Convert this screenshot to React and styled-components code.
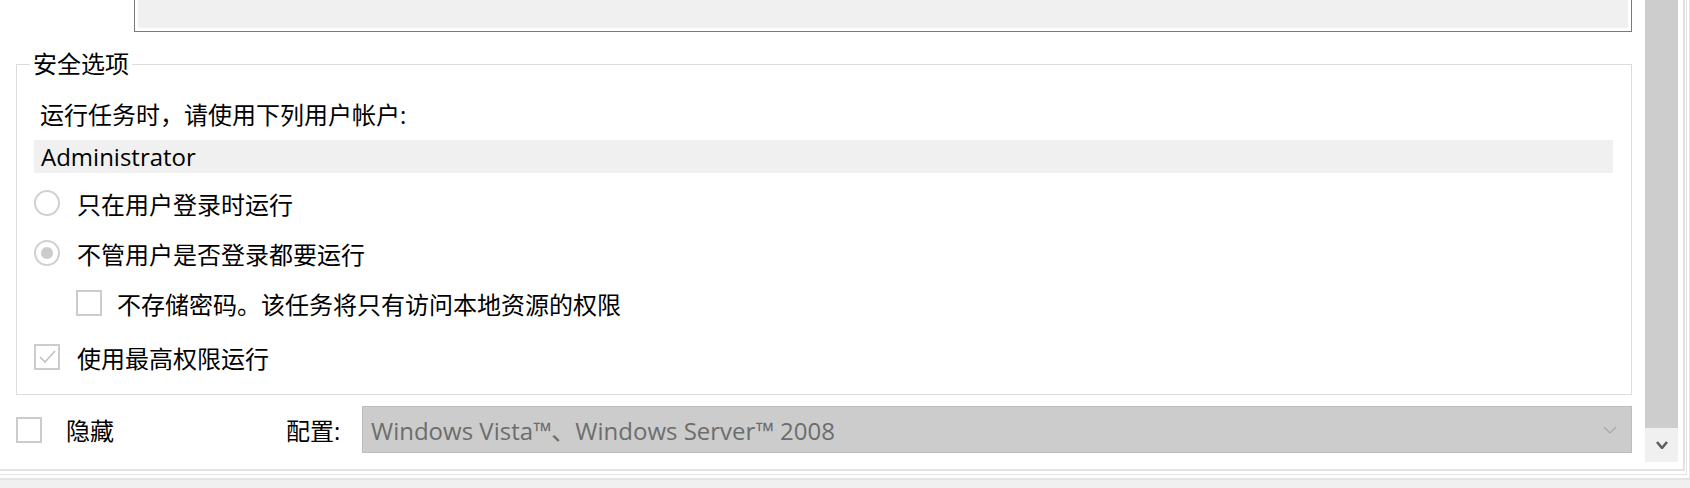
import React from 'react';
import styled, { createGlobalStyle } from 'styled-components';

const GlobalStyle = createGlobalStyle`
  html, body {
    margin: 0;
    padding: 0;
    background: #f0f0f0;
  }
  body {
    font-family: "Open Sans", "Noto Sans CJK SC", sans-serif;
    color: #000;
    overflow: hidden;
  }
  * {
    box-sizing: border-box;
  }
`;

const Screen = styled.div`
  width: 1690px;
  height: 488px;
  background: #f0f0f0;
  overflow: hidden;
`;

const OuterFrame = styled.div`
  height: 480px;
  padding: 0 2px 3px 0;
  background: #fff;
  border-bottom: 2px solid #e3e3e3;
  border-right: 1px solid #e6e6e6;
`;

const MiddleFrame = styled.div`
  height: 475px;
  padding: 0 1px 3px 0;
  border-bottom: 1px solid #e3e3e3;
  border-right: 1px solid #e6e6e6;
`;

const InnerFrame = styled.div`
  height: 471px;
  display: flex;
  border-bottom: 2px solid #e3e3e3;
  border-right: 2px solid #e3e3e3;
`;

const Content = styled.div`
  width: 1645px;
  padding-right: 13px;
  display: flex;
  flex-direction: column;
`;

const TopBox = styled.div`
  margin-left: 134px;
  height: 32px;
  padding: 0 3px 3px;
  border: 1px solid #7a7a7a;
  border-top: none;
`;

const TopFill = styled.div`
  height: 100%;
  background: #f0f0f0;
`;

const Group = styled.fieldset`
  margin: 16px 0 0 16px;
  padding: 0 18px 12px 17px;
  border: 1px solid #dcdcdc;
  height: 347px;
`;

const Legend = styled.legend`
  margin-left: -4px;
  padding: 0 3px;
  font-size: 24px;
  line-height: 32px;
`;

const Label = styled.div`
  margin-top: 19px;
  padding-left: 6px;
  height: 32px;
  font-size: 24px;
  line-height: 32px;
`;

const UserBand = styled.div`
  margin-top: 9px;
  height: 33px;
  padding-left: 7px;
  background: #f0f0f0;
  font-size: 24px;
  line-height: 33px;
`;

const Options = styled.div`
  margin-top: 5px;
  display: flex;
  flex-direction: column;
`;

const OptionRow = styled.div`
  height: 50px;
  display: flex;
  align-items: center;
  gap: ${(p) => (p.$indent ? 15 : 17)}px;
  padding-left: ${(p) => (p.$indent ? 42 : 0)}px;
  margin-top: ${(p) => p.$offset || 0}px;
  font-size: 24px;
`;

const Radio = styled.span`
  flex: none;
  width: 26px;
  height: 26px;
  border-radius: 50%;
  border: 2px solid #d0d0d0;
  background: #fff;
  display: flex;
  align-items: center;
  justify-content: center;

  &::after {
    content: '';
    width: 12px;
    height: 12px;
    border-radius: 50%;
    background: ${(p) => (p.$checked ? '#cccccc' : 'transparent')};
  }
`;

const Box = styled.span`
  flex: none;
  width: 26px;
  height: 26px;
  border: 2px solid #cccccc;
  background: #fff;
  display: flex;
  align-items: center;
  justify-content: center;
`;

const BottomRow = styled.div`
  margin-top: 11px;
  padding-left: 16px;
  height: 47px;
  display: flex;
  align-items: center;
  font-size: 24px;
`;

const HiddenLabel = styled.span`
  margin-left: 24px;
  width: 220px;
`;

const ConfigLabel = styled.span`
  width: 76px;
`;

const Combo = styled.div`
  flex: 1;
  height: 47px;
  background: #cccccc;
  border: 1px solid #bcbcbc;
  display: flex;
  align-items: center;
  padding: 0 14px 0 8px;
  color: #6d6d6d;
  font-size: 24px;
`;

const ComboText = styled.span`
  flex: 1;
  white-space: nowrap;
`;

const ScrollBar = styled.div`
  width: 33px;
  display: flex;
  flex-direction: column;
`;

const Thumb = styled.div`
  height: 428px;
  background: #cdcdcd;
`;

const ArrowButton = styled.div`
  height: 34px;
  background: #f0f0f0;
  display: flex;
  align-items: center;
  justify-content: center;
`;

const Check = () => (
  <svg width="20" height="20" viewBox="0 0 20 20">
    <polyline points="3,10 8,15 18,4" fill="none" stroke="#c2c2c2" strokeWidth="1.6" />
  </svg>
);

const Chevron = ({ color, w, h, sw }) => (
  <svg width={w} height={h} viewBox={`0 0 ${w} ${h}`}>
    <polyline
      points={`1,1 ${w / 2},${h - 1} ${w - 1},1`}
      fill="none"
      stroke={color}
      strokeWidth={sw}
    />
  </svg>
);

export default function App() {
  return (
    <Screen>
      <GlobalStyle />
      <OuterFrame>
        <MiddleFrame>
          <InnerFrame>
            <Content>
              <TopBox>
                <TopFill />
              </TopBox>
              <Group>
                <Legend>安全选项</Legend>
                <Label>运行任务时，请使用下列用户帐户:</Label>
                <UserBand>Administrator</UserBand>
                <Options>
                  <OptionRow>
                    <Radio />
                    <span>只在用户登录时运行</span>
                  </OptionRow>
                  <OptionRow>
                    <Radio $checked />
                    <span>不管用户是否登录都要运行</span>
                  </OptionRow>
                  <OptionRow $indent>
                    <Box />
                    <span>不存储密码。该任务将只有访问本地资源的权限</span>
                  </OptionRow>
                  <OptionRow $offset={4}>
                    <Box>
                      <Check />
                    </Box>
                    <span>使用最高权限运行</span>
                  </OptionRow>
                </Options>
              </Group>
              <BottomRow>
                <Box />
                <HiddenLabel>隐藏</HiddenLabel>
                <ConfigLabel>配置:</ConfigLabel>
                <Combo>
                  <ComboText>Windows Vista™、Windows Server™ 2008</ComboText>
                  <Chevron color="#a6a6a6" w={14} h={8} sw={1.2} />
                </Combo>
              </BottomRow>
            </Content>
            <ScrollBar>
              <Thumb />
              <ArrowButton>
                <Chevron color="#606060" w={12} h={8} sw={2.6} />
              </ArrowButton>
            </ScrollBar>
          </InnerFrame>
        </MiddleFrame>
      </OuterFrame>
    </Screen>
  );
}
